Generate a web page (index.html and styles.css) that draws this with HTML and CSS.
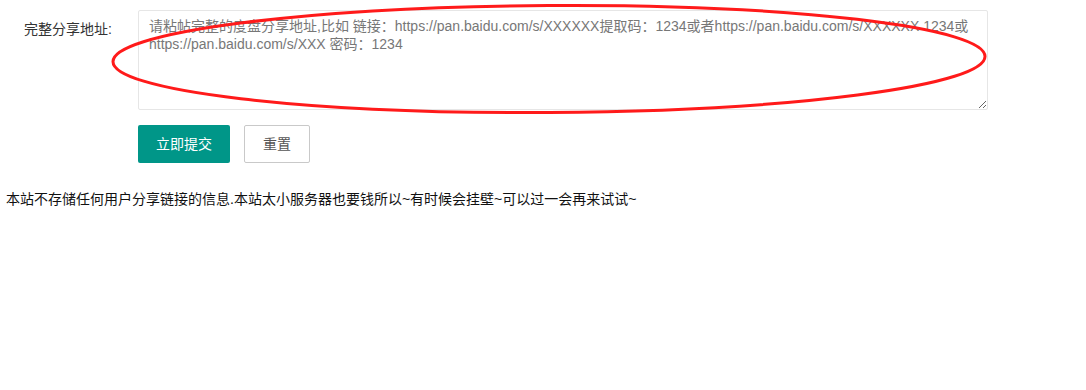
FILE: index.html
```html
<!DOCTYPE html>
<html lang="zh-CN">
<head>
<meta charset="utf-8">
<title>分享地址</title>
<link rel="stylesheet" href="styles.css">
</head>
<body>
<form class="form">
  <div class="form-item">
    <label class="form-label" for="url">完整分享地址:</label>
    <textarea id="url" class="form-textarea" placeholder="请粘帖完整的度盘分享地址,比如 链接：https://pan.baidu.com/s/XXXXXX提取码：1234或者https://pan.baidu.com/s/XXXXXX 1234或&#10;https://pan.baidu.com/s/XXX 密码：1234"></textarea>
  </div>
  <div class="form-actions">
    <button type="button" class="btn btn-primary">立即提交</button>
    <button type="reset" class="btn btn-default">重置</button>
  </div>
</form>
<p class="note">本站不存储任何用户分享链接的信息.本站太小服务器也要钱所以~有时候会挂壁~可以过一会再来试试~</p>
<svg class="annotation" width="1086" height="390" viewBox="0 0 1086 390" aria-hidden="true">
  <ellipse cx="549" cy="59" rx="436" ry="53.5" transform="rotate(-0.35 549 59)" fill="none" stroke="#ff1a1a" stroke-width="3"/>
</svg>
</body>
</html>
```

FILE: styles.css
```css
html, body {
  margin: 0;
  padding: 0;
  background: #fff;
}

body {
  position: relative;
  width: 1086px;
  height: 390px;
  overflow: hidden;
  font-family: "Liberation Sans", "Noto Sans CJK SC", sans-serif;
  font-size: 14px;
  color: #333;
}

.form {
  margin: 0;
  padding-top: 10px;
}

.form-item {
  display: flex;
  align-items: flex-start;
}

.form-label {
  box-sizing: border-box;
  width: 112px;
  margin-right: 26px;
  padding: 9px 0;
  line-height: 20px;
  text-align: right;
  color: #333;
}

.form-textarea {
  box-sizing: border-box;
  width: 850px;
  height: 100px;
  margin: 0;
  padding: 6px 10px;
  border: 1px solid #e6e6e6;
  border-radius: 2px;
  font-family: "Liberation Sans", "Noto Sans CJK SC", sans-serif;
  font-size: 14px;
  line-height: 18px;
  color: #333;
  background: #fff;
  outline: none;
  resize: vertical;
}

.form-textarea::placeholder {
  color: #777;
}

.form-actions {
  display: flex;
  gap: 14px;
  margin-top: 15px;
  margin-left: 138px;
}

.btn {
  box-sizing: border-box;
  height: 38px;
  padding: 0 18px;
  border-radius: 2px;
  font-family: "Liberation Sans", "Noto Sans CJK SC", sans-serif;
  font-size: 14px;
  cursor: pointer;
}

.btn-primary {
  border: none;
  line-height: 38px;
  background: #009688;
  color: #fff;
}

.btn-default {
  border: 1px solid #c9c9c9;
  line-height: 36px;
  background: #fff;
  color: #555;
}

.note {
  margin: 26px 0 0;
  padding-left: 6px;
  line-height: 20px;
  color: #111;
}

.annotation {
  position: absolute;
  left: 0;
  top: 0;
  pointer-events: none;
}
```
